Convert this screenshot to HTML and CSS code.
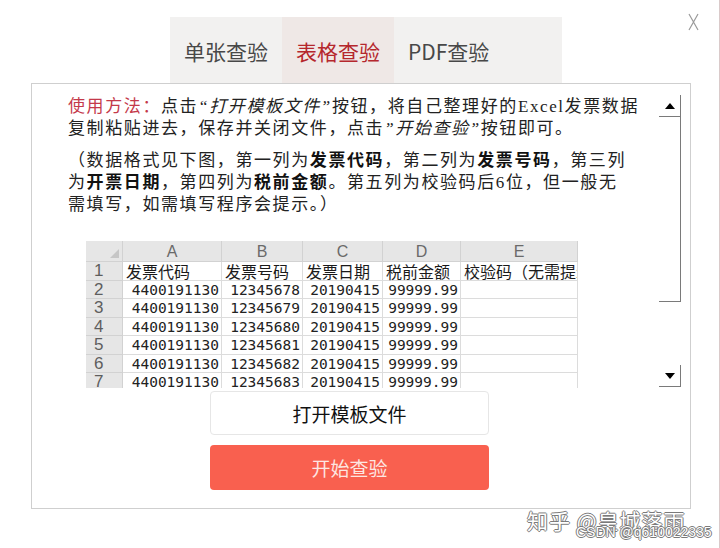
FILE: index.html
```html
<!DOCTYPE html>
<html>
<head>
    <meta charset="utf-8">
    <link rel="stylesheet" href="styles.css">
</head>
<body>
    <div class="page">
        <header class="top">
            <nav class="tabs">
                <span class="tab">单张查验</span>
                <span class="tab active">表格查验</span>
                <span class="tab">PDF查验</span>
            </nav>
            <button class="close-btn">
                <svg width="11" height="18" viewBox="0 0 11 18"><path d="M1 1L10 17M10 1L1 17" stroke="#9a9a9a" stroke-width="1.2" fill="none"/></svg>
            </button>
        </header>

        <section class="panel">
            <div class="scroll-area">
                <div class="doc">
                    <p class="para"><span class="label">使用方法：</span>点击<i>“打开模板文件”</i>按钮，将自己整理好的Excel发票数据<br>复制粘贴进去，保存并关闭文件，点击<i>”开始查验”</i>按钮即可。</p>
                    <p class="para">（数据格式见下图，第一列为<b>发票代码</b>，第二列为<b>发票号码</b>，第三列<br>为<b>开票日期</b>，第四列为<b>税前金额</b>。第五列为校验码后6位，但一般无<br>需填写，如需填写程序会提示。）</p>

                    <div class="sheet">
                        <div class="cell hd corner"><svg width="9" height="9" viewBox="0 0 9 9"><polygon points="9,0 9,9 0,9" fill="#c6c6c6"/></svg></div>
                        <div class="cell hd">A</div>
                        <div class="cell hd">B</div>
                        <div class="cell hd">C</div>
                        <div class="cell hd">D</div>
                        <div class="cell hd">E</div>

                        <div class="cell rh">1</div>
                        <div class="cell txt">发票代码</div>
                        <div class="cell txt">发票号码</div>
                        <div class="cell txt">发票日期</div>
                        <div class="cell txt">税前金额</div>
                        <div class="cell txt clip">校验码（无需提示）</div>

                        <div class="cell rh">2</div>
                        <div class="cell num">4400191130</div>
                        <div class="cell num">12345678</div>
                        <div class="cell num">20190415</div>
                        <div class="cell num">99999.99</div>
                        <div class="cell"></div>

                        <div class="cell rh">3</div>
                        <div class="cell num">4400191130</div>
                        <div class="cell num">12345679</div>
                        <div class="cell num">20190415</div>
                        <div class="cell num">99999.99</div>
                        <div class="cell"></div>

                        <div class="cell rh">4</div>
                        <div class="cell num">4400191130</div>
                        <div class="cell num">12345680</div>
                        <div class="cell num">20190415</div>
                        <div class="cell num">99999.99</div>
                        <div class="cell"></div>

                        <div class="cell rh">5</div>
                        <div class="cell num">4400191130</div>
                        <div class="cell num">12345681</div>
                        <div class="cell num">20190415</div>
                        <div class="cell num">99999.99</div>
                        <div class="cell"></div>

                        <div class="cell rh">6</div>
                        <div class="cell num">4400191130</div>
                        <div class="cell num">12345682</div>
                        <div class="cell num">20190415</div>
                        <div class="cell num">99999.99</div>
                        <div class="cell"></div>

                        <div class="cell rh">7</div>
                        <div class="cell num">4400191130</div>
                        <div class="cell num">12345683</div>
                        <div class="cell num">20190415</div>
                        <div class="cell num">99999.99</div>
                        <div class="cell"></div>
                    </div>
                </div>

                <div class="scrollbar">
                    <div class="sb-btn"><svg width="10" height="6" viewBox="0 0 10 6"><polygon points="5,0 10,6 0,6" fill="#000"/></svg></div>
                    <div class="sb-thumb"></div>
                    <div class="sb-track"></div>
                    <div class="sb-btn"><svg width="10" height="6" viewBox="0 0 10 6"><polygon points="0,0 10,0 5,6" fill="#000"/></svg></div>
                </div>
            </div>

            <div class="actions">
                <button class="btn btn-open">打开模板文件</button>
                <button class="btn btn-start">开始查验</button>
            </div>
        </section>

        <div class="wm wm-zhihu">知乎 @皇城落雨</div>
        <div class="wm wm-csdn">CSDN @q610022335</div>
    </div>
</body>
</html>
```

FILE: styles.css
```css
* {
    margin: 0;
    padding: 0;
    box-sizing: border-box;
}

body {
    font-family: "Noto Sans CJK SC", sans-serif;
    background-color: #fff;
    width: 720px;
    height: 548px;
    overflow: hidden;
}

.page {
    position: relative;
    height: 548px;
    border-right: 1px solid #dacaca;
}

.top {
    display: flex;
    align-items: flex-start;
    padding: 17px 0 0 170px;
}

.tabs {
    display: flex;
    width: 392px;
    height: 66px;
    background-color: #f2f1f0;
}

.tab {
    padding: 2px 14px 0;
    line-height: 64px;
    font-size: 21px;
    color: #484848;
}

.tab.active {
    background-color: #efe8e6;
    color: #b5272d;
}

.close-btn {
    margin: -4px 20px 0 auto;
    background: none;
    border: none;
    display: flex;
}

.panel {
    margin-left: 31px;
    width: 660px;
    height: 426px;
    border: 1px solid #cfcfcf;
    display: flex;
    flex-direction: column;
}

.scroll-area {
    display: flex;
    height: 304px;
    overflow: hidden;
}

.doc {
    flex: 1;
    padding: 12px 0 0 36px;
}

.para {
    font-family: "Liberation Serif", "Noto Sans CJK SC", serif;
    font-size: 17px;
    letter-spacing: 1.6px;
    line-height: 22px;
    color: #222;
    white-space: nowrap;
}

.para + .para {
    margin-top: 10px;
}

.para .label {
    color: #c4394a;
}

.para b {
    color: #111;
}

.sheet {
    display: grid;
    grid-template-columns: 37px 99px 81px 80px 78px 117px;
    grid-template-rows: 21px;
    grid-auto-rows: 18.5px;
    width: 492px;
    margin: 25px 0 0 18px;
    background-color: #fff;
}

.cell {
    border-right: 1px solid #dcdcdc;
    border-bottom: 1px solid #dcdcdc;
    white-space: nowrap;
    line-height: 18px;
    padding: 0 2px;
    color: #1a1a1a;
}

.cell.clip {
    overflow: hidden;
}

.hd {
    background-color: #e6e6e6;
    border-color: #d2d2d2;
    color: #6a6a6a;
    text-align: center;
    font-family: "Liberation Sans", sans-serif;
    font-size: 16px;
    line-height: 21px;
}

.corner {
    display: flex;
    align-items: flex-end;
    justify-content: flex-end;
    padding: 0 3px 3px 0;
}

.rh {
    background-color: #e6e6e6;
    border-color: #d2d2d2;
    color: #5e5e5e;
    font-family: "Liberation Sans", sans-serif;
    font-size: 17px;
    padding-left: 8px;
}

.txt {
    font-size: 16px;
    padding-left: 3px;
}

.num {
    text-align: right;
    font-family: "DejaVu Sans Mono", monospace;
    font-size: 14.5px;
    color: #222;
}

.scrollbar {
    width: 22px;
    margin: 11px 9px 1px 0;
    display: flex;
    flex-direction: column;
}

.sb-btn {
    height: 22px;
    border-right: 1px solid #7a7a7a;
    border-bottom: 1px solid #7a7a7a;
    display: flex;
    align-items: center;
    justify-content: center;
}

.sb-thumb {
    height: 185px;
    border-right: 1px solid #7a7a7a;
    border-bottom: 1px solid #7a7a7a;
}

.sb-track {
    flex: 1;
}

.actions {
    display: flex;
    flex-direction: column;
    gap: 10px;
    padding: 3px 0 0 178px;
}

.btn {
    width: 279px;
    height: 44px;
    font-family: "Noto Sans CJK SC", sans-serif;
    font-size: 19px;
    border-radius: 4px;
}

.btn-open {
    background-color: #fff;
    border: 1px solid #e6e6e6;
    color: #111;
}

.btn-start {
    height: 45px;
    background-color: #f9604f;
    border: none;
    color: #fde6e2;
}

.wm {
    position: absolute;
    color: #fff;
    white-space: nowrap;
    text-shadow: 1px 0 #7a7a7a, -1px 0 #7a7a7a, 0 1px #7a7a7a, 0 -1px #7a7a7a;
}

.wm-zhihu {
    left: 527px;
    top: 505px;
    font-size: 21px;
    letter-spacing: 1px;
}

.wm-csdn {
    left: 576px;
    top: 524px;
    font-family: "Liberation Sans", sans-serif;
    font-size: 14px;
}
```
